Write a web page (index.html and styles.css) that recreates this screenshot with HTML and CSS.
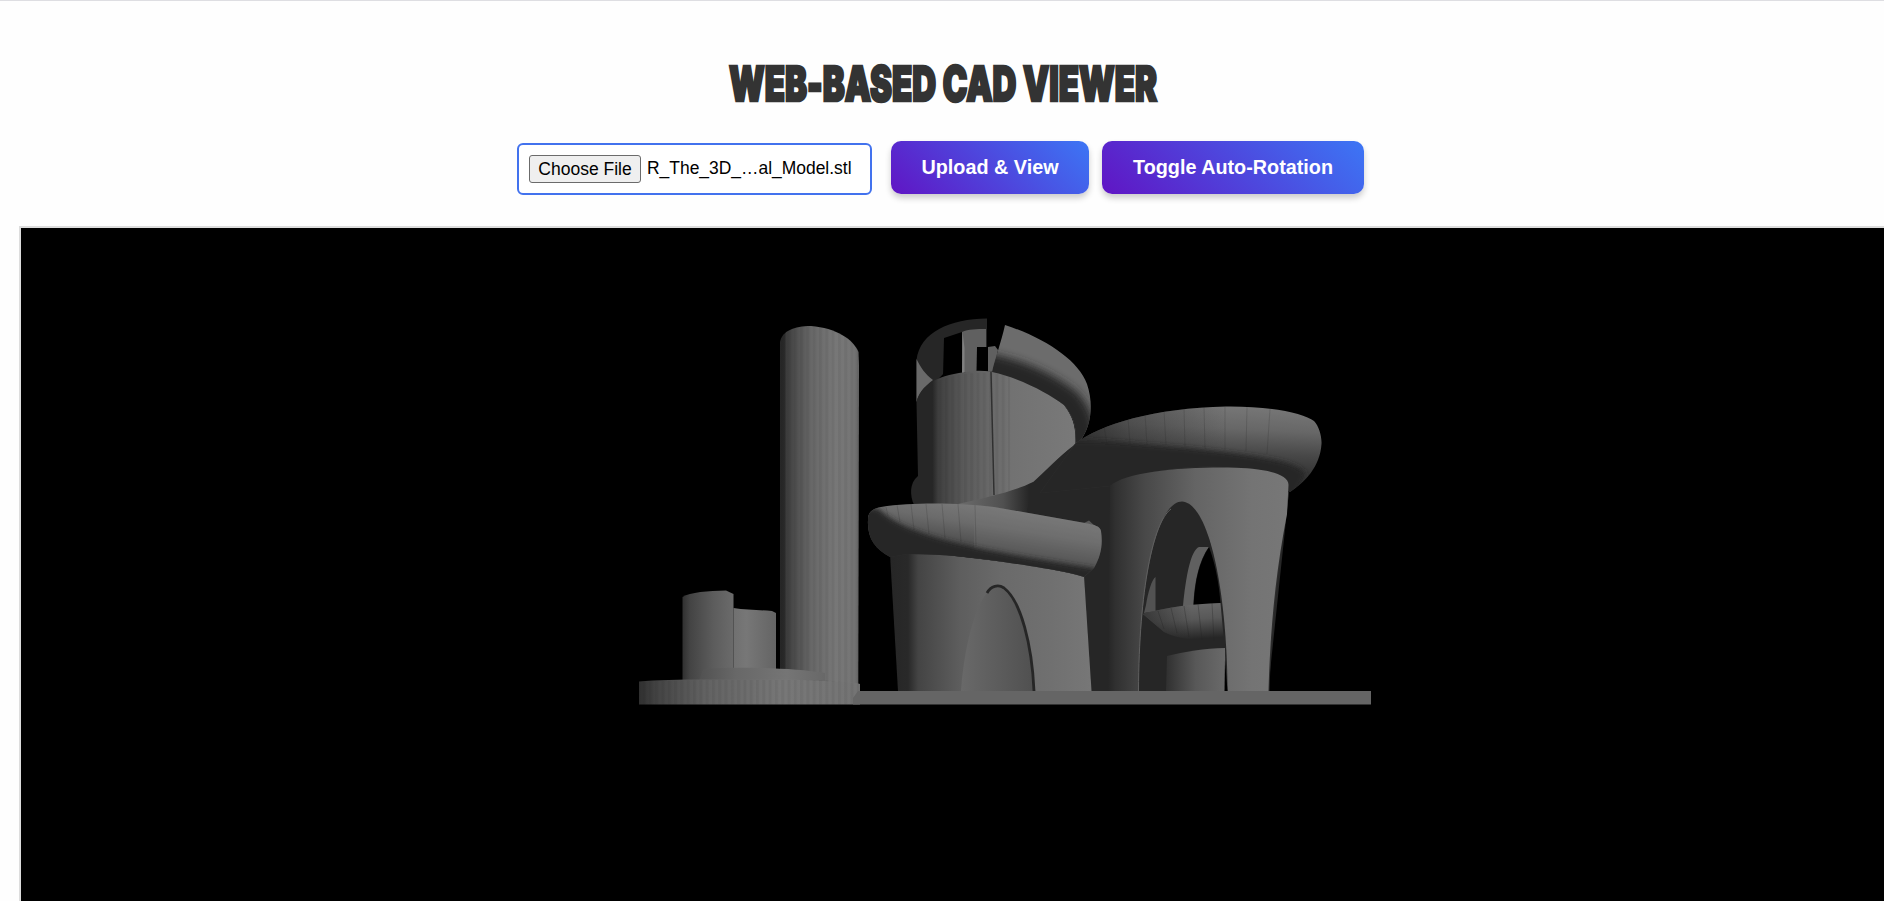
FILE: index.html
```
<!DOCTYPE html>
<html lang="en">
<head>
<meta charset="utf-8">
<title>Web-Based CAD Viewer</title>
<link rel="stylesheet" href="styles.css">
</head>
<body>
<main class="page">
  <h1 class="title"><svg class="title-art" viewBox="0 0 440 60"><text class="title-text" x="6" y="47" textLength="428" lengthAdjust="spacingAndGlyphs">WEB-BASED CAD VIEWER</text></svg></h1>
  <div class="controls">
    <div class="file"><button class="choose" type="button">Choose File</button><span class="filename">R_The_3D_…al_Model.stl</span></div>
    <button class="action upload" type="button">Upload &amp; View</button>
    <button class="action toggle" type="button">Toggle Auto-Rotation</button>
  </div>
  <div class="viewer">
    <svg class="scene" viewBox="620 300 770 420" width="770" height="420">
      <defs>
        <linearGradient id="column"><stop offset="0" stop-color="#262626"/><stop offset=".06" stop-color="#2b2b2b"/><stop offset=".08" stop-color="#3c3c3c"/><stop offset=".2" stop-color="#505050"/><stop offset=".4" stop-color="#686868"/><stop offset=".7" stop-color="#777"/><stop offset=".93" stop-color="#757575"/><stop offset="1" stop-color="#666"/></linearGradient>
        <linearGradient id="stubA"><stop offset="0" stop-color="#303030"/><stop offset=".15" stop-color="#444"/><stop offset=".6" stop-color="#5c5c5c"/><stop offset="1" stop-color="#6b6b6b"/></linearGradient>
        <linearGradient id="stubB"><stop offset="0" stop-color="#707070"/><stop offset=".3" stop-color="#777"/><stop offset="1" stop-color="#646464"/></linearGradient>
        <linearGradient id="step"><stop offset="0" stop-color="#505050"/><stop offset=".3" stop-color="#686868"/><stop offset=".7" stop-color="#757575"/><stop offset="1" stop-color="#686868"/></linearGradient>
        <linearGradient id="disc"><stop offset="0" stop-color="#303030"/><stop offset=".08" stop-color="#444"/><stop offset=".3" stop-color="#626262"/><stop offset=".65" stop-color="#777"/><stop offset="1" stop-color="#747474"/></linearGradient>
        <linearGradient id="drum"><stop offset="0" stop-color="#262626"/><stop offset=".1" stop-color="#262626"/><stop offset=".14" stop-color="#404040"/><stop offset=".3" stop-color="#5a5a5a"/><stop offset=".48" stop-color="#6a6a6a"/><stop offset=".6" stop-color="#727272"/><stop offset="1" stop-color="#797979"/></linearGradient>
        <linearGradient id="wallL"><stop offset="0" stop-color="#262626"/><stop offset=".09" stop-color="#292929"/><stop offset=".14" stop-color="#444"/><stop offset=".35" stop-color="#5e5e5e"/><stop offset=".55" stop-color="#6a6a6a"/><stop offset=".8" stop-color="#707070"/><stop offset="1" stop-color="#777"/></linearGradient>
        <linearGradient id="door"><stop offset="0" stop-color="#696969"/><stop offset="1" stop-color="#505050"/></linearGradient>
        <linearGradient id="wallR"><stop offset="0" stop-color="#262626"/><stop offset=".04" stop-color="#303030"/><stop offset=".2" stop-color="#484848"/><stop offset=".48" stop-color="#646464"/><stop offset=".8" stop-color="#747474"/><stop offset="1" stop-color="#777"/></linearGradient>
        <linearGradient id="ringL" gradientUnits="userSpaceOnUse" x1="986" y1="505" x2="977" y2="562"><stop offset="0" stop-color="#797979"/><stop offset=".35" stop-color="#6b6b6b"/><stop offset=".75" stop-color="#4c4c4c"/><stop offset="1" stop-color="#303030"/></linearGradient>
        <linearGradient id="ringR" gradientUnits="userSpaceOnUse" x1="1240" y1="407" x2="1237" y2="470"><stop offset="0" stop-color="#767676"/><stop offset=".35" stop-color="#676767"/><stop offset=".72" stop-color="#484848"/><stop offset="1" stop-color="#363636"/></linearGradient>
        <linearGradient id="ringRShade" gradientUnits="userSpaceOnUse" x1="1075" y1="0" x2="1226" y2="0"><stop offset="0" stop-color="#262626" stop-opacity=".8"/><stop offset=".35" stop-color="#262626" stop-opacity=".4"/><stop offset="1" stop-color="#262626" stop-opacity="0"/></linearGradient>
        <linearGradient id="shelf" x1="0" y1="0" x2=".15" y2="1"><stop offset="0" stop-color="#6c6c6c"/><stop offset=".5" stop-color="#585858"/><stop offset="1" stop-color="#262626"/></linearGradient>
        <linearGradient id="shelfShade"><stop offset="0" stop-color="#262626" stop-opacity=".7"/><stop offset=".6" stop-color="#262626" stop-opacity="0"/></linearGradient>
        <linearGradient id="inner"><stop offset="0" stop-color="#303030"/><stop offset=".5" stop-color="#585858"/><stop offset="1" stop-color="#6a6a6a"/></linearGradient>
        <linearGradient id="ramp"><stop offset="0" stop-color="#6c6c6c"/><stop offset=".6" stop-color="#505050"/><stop offset=".95" stop-color="#262626"/></linearGradient>
        <pattern id="facets" width="6.3" height="10" patternUnits="userSpaceOnUse"><path d="M1.500 0V10" stroke="#000" stroke-opacity=".05" stroke-width="3"/></pattern>
        <clipPath id="arcClip"><path d="M1005 325C1045 338 1078 360 1087 384C1094 405 1091 427 1080 441L1075.500 443C1077 426 1073 416 1064 405C1048 393 1020 378 992 372C996 355 1001 343 1005 325Z"/></clipPath>
        <clipPath id="ringLClip"><path d="M868 520C868 512 872 509 881 507C915 502 960 503 994 507L1085 523C1095 525 1100 526 1101 531C1103 545 1101 556 1094 568L1084 577C1066 571 1048 569 1030 566C985 559 950 554 907 554L890 557C875 549 867 538 868 520Z"/></clipPath>
        <clipPath id="ringRClip"><path d="M1075 444C1100 424 1155 408 1226 406.500C1270 406 1304 413 1314 421C1319 426 1322 437 1321.500 444C1320 467 1305 482 1290 492L1260 470C1200 462 1140 470 1110 486L1040 493Z"/></clipPath>
        <filter id="soft" x="-20%" y="-40%" width="140%" height="180%"><feGaussianBlur stdDeviation="4"/></filter>
        <filter id="softer" x="-20%" y="-40%" width="140%" height="180%"><feGaussianBlur stdDeviation="2.500"/></filter>
      </defs>

      <!-- left base, chimney and stubs -->
      <path d="M780 342C782 331 794 326 811 326C836 328 853 339 858.500 352L859 365L858.300 684H780Z" fill="url(#column)"/>
      <path d="M780 342C782 331 794 326 811 326C836 328 853 339 858.500 352L858.300 684H780Z" fill="url(#facets)"/>
      <path d="M682.500 597C690 592 708 591 726 590.500L733.500 594V682H682.500Z" fill="url(#stubA)"/>
      <path d="M733.500 608C745 610 760 610 772 611L776 613V672H733.500Z" fill="url(#stubB)"/>
      <path d="M703 669C740 666.500 795 668 825 673V684H698Z" fill="url(#step)"/>
      <path d="M639 681.500C655 680 680 679.500 705 679.500H790L824 681L856 683L860 684V704.500H639Z" fill="url(#disc)"/>
      <path d="M639 681.500L705 680H824L860 684V704.500H639Z" fill="url(#facets)"/>

      <!-- dark body behind the rings -->
      <path d="M1010 490L1031 482L1075 444L1110 438L1265 462L1289 492L1268 691H1000V520Z" fill="#262626"/>

      <!-- round tower -->
      <path d="M916.500 360C920 332 950 319 987 318.500V372H945L916.500 402Z" fill="#262626"/>
      <path d="M916.500 359C921 368 925 374 933 380C924 387 919 393 916.500 402Z" fill="#696969"/>
      <path d="M944 338L962 332V373L943 376Z" fill="#000"/>
      <path d="M962 332C968 329 977 329 986 329V372H962.500Z" fill="#606060"/>
      <path d="M962.500 332L964.500 348V373H962Z" fill="#808080"/>
      <path d="M977 347H988V371.500H976.500Z" fill="#000"/>
      <path d="M988 347L995 346L998 350L993 371.500H988Z" fill="#606060"/>
      <path d="M918 476C909 483 910 496 914 505L930 510L934 476Z" fill="#262626"/>
      <path d="M916.500 402C922 380 945 374 975 371C1010 369 1048 391 1064 405C1073 417 1076 426 1075.500 444C1058 457 1046 471 1031 484C1005 497 980 504 955 506H918V476Z" fill="url(#drum)"/>
      <path d="M936 382C955 372 990 370 1010 376V494L955 505H936Z" fill="url(#facets)"/>
      <path d="M991 372L994 495" stroke="#303030" stroke-width="1.500" fill="none"/>
      <g clip-path="url(#arcClip)">
        <path d="M985 320H1100V450H985Z" fill="#6c6c6c"/>
        <path d="M980 369C1020 376 1048 391 1066 405C1077 418 1080 430 1076 450" stroke="#262626" stroke-width="34" fill="none" filter="url(#soft)"/>
      </g>

      <!-- right ring -->
      <g clip-path="url(#ringRClip)">
        <path d="M1030 400H1330V500H1030Z" fill="url(#ringR)"/>
        <path d="M1030 400H1226V500H1030Z" fill="url(#ringRShade)"/>
        <path d="M1060 440C1100 440 1130 443 1150 445C1190 448 1240 453 1270 459C1292 463 1308 470 1305 477L1290 505H1030Z" fill="#262626" filter="url(#softer)"/>
        <path d="M1104 426l3 18M1128 418l2 26M1145 414l2 31M1164 411l2 34M1184 409l1 38M1204 407l1 42M1225 407v43M1247 407l-1 44M1270 409l-3 45" stroke="#222" stroke-opacity=".18" fill="none"/>
      </g>

      <!-- right building -->
      <path d="M1289 492L1286.500 514C1276 585 1271 640 1269.500 691H1262L1280 510Z" fill="#2d2d2d"/>
      <path d="M1110 486C1125 472 1180 467 1228 467.500C1262 468 1289 473 1288.500 485L1287 514C1274 580 1270 640 1268.500 691H1108Z" fill="url(#wallR)"/>
      <path d="M1138.500 691C1139 590 1155 502 1182 501.500C1209 503 1227 590 1227.500 691Z" fill="#262626"/>
      <path d="M1138.500 691C1139 590 1153 522 1171 509" stroke="#606060" fill="none"/>
      <path d="M1146 605C1148 592 1152 579 1155.500 577V611L1144 613Z" fill="#525252"/>
      <path d="M1183 606C1186 575 1191 550 1199 547H1209C1199 560 1194 584 1193.500 606Z" fill="#606060"/>
      <path d="M1193.500 606C1195 580 1199 562 1209 547C1216 566 1219 585 1220.500 603Z" fill="#000"/>
      <path d="M1143 614C1168 607 1190 604 1220.500 603L1224 642C1200 640 1180 640 1164 632Z" fill="url(#shelf)"/>
      <path d="M1143 614C1168 607 1190 604 1220.500 603L1224 642C1200 640 1180 640 1164 632Z" fill="url(#shelfShade)"/>
      <path d="M1158 611l6 18M1171 608l6 25M1184 606l5 31M1198 604l4 36M1212 603l2 38" stroke="#222" stroke-opacity=".3" fill="none"/>
      <path d="M1167 656C1184 652 1205 648 1225 648L1225.500 691H1166Z" fill="url(#inner)"/>
      <path d="M1225 660L1227.500 691H1224.500Z" fill="#000"/>

      <!-- left building -->
      <path d="M958 504C990 497 1015 491 1033 482L1026 515H1000Z" fill="url(#ramp)"/>
      <path d="M890 554L930 553L1030 565L1084 576L1091.500 691H898Z" fill="url(#wallL)"/>
      <path d="M961 691C964 645 978 588 997 587C1018 590 1032 645 1034 691Z" fill="url(#door)"/>
      <path d="M987 593C991 586 998 584 1004 588C1021 601 1032 645 1034 691" stroke="#262626" stroke-width="2.800" fill="none"/>
      <path d="M1084 523L1089 520.500L1096 527Z" fill="#585858"/>
      <g clip-path="url(#ringLClip)">
        <path d="M860 495H1110V585H860Z" fill="url(#ringL)"/>
        <path d="M974 500L1110 515V585L974 562Z" fill="#777" opacity=".25"/>
        <path d="M855 505L879 509C890 520 905 527 925 534C970 549 1030 558 1098 569L1090 590H855Z" fill="#262626" filter="url(#softer)"/>
        <path d="M886 507l2 9M897 505l3 17M911 504l3 26M926 504l3 30M942 504l3 34M958 504l3 38M975 505l1 41" stroke="#222" stroke-opacity=".18" fill="none"/>
      </g>
      <path d="M858 691H1371V704.500H853V698Z" fill="#656565"/>
    </svg>
  </div>
</main>
</body>
</html>
```
FILE: styles.css
```
* { box-sizing: border-box; }
body {
  margin: 0;
  height: 901px;
  overflow: hidden;
  background: #fefefe;
  font-family: Arial, "Liberation Sans", sans-serif;
}
.page {
  height: 901px;
  border-top: 1px solid #dedee2;
  display: flex;
  flex-direction: column;
}
.title {
  margin: 53px 0 0;
  height: 60px;
  padding-left: 2px;
  text-align: center;
  line-height: 0;
}
.title-art { width: 440px; height: 60px; overflow: visible; }
.title-text {
  font-family: Impact, Inter, sans-serif;
  font-size: 48px;
  font-weight: 900;
  font-feature-settings: "calt" 0;
  fill: #333;
  stroke: #333;
  stroke-width: 2.6px;
}
.controls {
  margin-top: 27px;
  height: 85px;
  padding-left: 517px;
  display: flex;
  align-items: flex-start;
}
.file {
  margin: 2px 19px 0 0;
  width: 355px;
  height: 52px;
  padding: 0 10px 1px;
  border: 2px solid #4272ee;
  border-radius: 6px;
  background: #fff;
  display: flex;
  align-items: center;
  gap: 6px;
}
.choose {
  width: 112px;
  height: 28px;
  padding: 0;
  border: 1px solid #6b6b6b;
  border-radius: 3px;
  background: #efefef;
  color: #000;
  font: 17.5px/24px Arial, "Liberation Sans", sans-serif;
}
.filename { font-size: 17.45px; white-space: nowrap; }
.action {
  height: 53px;
  padding: 0 0 1px;
  border: 0;
  border-radius: 10px;
  background: linear-gradient(45deg, #6015c4, #3c76f5);
  box-shadow: 0 4px 6px rgba(0, 0, 0, .2);
  color: #fff;
  font: bold 19.8px Arial, "Liberation Sans", sans-serif;
}
.upload { width: 198px; margin-right: 13px; }
.toggle { width: 262px; }
.viewer {
  flex: 1;
  margin-left: 19px;
  border: solid #ddd;
  border-width: 2px 0 0 2px;
  background: #000;
}
.scene { display: block; margin: 72px 0 0 599px; }
```
